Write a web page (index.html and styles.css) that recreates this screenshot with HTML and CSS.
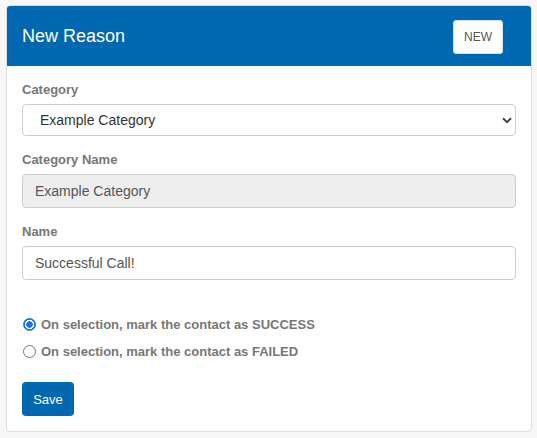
FILE: index.html
```html
<!DOCTYPE html>
<html>
<head>
<meta charset="utf-8">
<link rel="stylesheet" href="styles.css">
</head>
<body>
<div class="card">
  <div class="card-header">
    <h1 class="title">New Reason</h1>
    <button class="btn-new">NEW</button>
  </div>
  <div class="card-body">
    <div class="group">
      <label class="lbl">Category</label>
      <div class="select-wrap">
        <select class="control select"><option>Example Category</option></select>
        <svg class="chev" width="10" height="7" viewBox="0 0 10 7"><path d="M1 1.2 L5 5.2 L9 1.2" fill="none" stroke="#444" stroke-width="2"/></svg>
      </div>
    </div>
    <div class="group">
      <label class="lbl">Category Name</label>
      <input class="control disabled" value="Example Category" disabled>
    </div>
    <div class="group">
      <label class="lbl">Name</label>
      <input class="control" value="Successful Call!">
    </div>
    <div class="radios">
      <label class="radio"><input type="radio" name="r" checked><span>On selection, mark the contact as SUCCESS</span></label>
      <label class="radio"><input type="radio" name="r"><span>On selection, mark the contact as FAILED</span></label>
    </div>
    <button class="btn-save">Save</button>
  </div>
</div>
</body>
</html>
```
FILE: styles.css
```css
html, body { margin: 0; padding: 0; }
body {
  background: #f7f7f7;
  font-family: "Liberation Sans", Arial, Helvetica, sans-serif;
  padding: 5px 5px 0 6px;
}
.card {
  background: #fff;
  border: 1px solid #dcdcdc;
  border-radius: 4px;
  overflow: hidden;
  height: 427px;
  box-sizing: border-box;
}
.card-header {
  background: #0068b0;
  height: 60px;
  display: flex;
  align-items: center;
  justify-content: space-between;
  padding: 0 28px 0 15px;
}
.title {
  margin: 0;
  color: #fff;
  font-weight: 400;
  font-size: 18px;
}
.btn-new {
  width: 50px;
  height: 34px;
  background: #fff;
  border: 1px solid #ddd;
  border-radius: 3px;
  color: #555;
  font-family: inherit;
  font-size: 12px;
  padding: 0;
  margin-top: 1px;
}
.card-body {
  padding: 15px 15px 15px 15px;
}
.group { margin-bottom: 15px; }
.lbl {
  display: block;
  color: #777;
  font-size: 13px;
  font-weight: 700;
  line-height: 18px;
  margin-bottom: 5px;
}
.control {
  display: block;
  width: 100%;
  box-sizing: border-box;
  height: 34px;
  border: 1px solid #ccc;
  border-radius: 4px;
  padding: 0 12px;
  font-family: inherit;
  font-size: 14px;
  color: #555;
  background: #fff;
  margin: 0;
}
.select-wrap { position: relative; }
.select {
  appearance: none;
  -webkit-appearance: none;
  height: 32px;
  padding-left: 17px;
  color: #333;
}
.chev {
  position: absolute;
  right: 4px;
  top: 13px;
}
.disabled {
  background: #eee;
  color: #555;
  -webkit-text-fill-color: #555;
  opacity: 1;
}
.radios {
  padding-top: 20px;
  display: flex;
  flex-direction: column;
  gap: 8px;
}
.radio {
  display: flex;
  align-items: center;
  color: #777;
  font-size: 13px;
  font-weight: 700;
  line-height: 19px;
}
.radio input {
  appearance: none;
  -webkit-appearance: none;
  width: 13px;
  height: 13px;
  margin: 0 5px 0 1px;
  border: 1px solid #767676;
  border-radius: 50%;
  box-sizing: border-box;
  background: #fff;
}
.radio input:checked {
  border: 1px solid #1a73e8;
  background: radial-gradient(circle, #1a73e8 0 3px, #fff 3.5px 4.5px, #1a73e8 5px);
}
.btn-save {
  margin-top: 21px;
  width: 52px;
  height: 34px;
  background: #0068b0;
  color: #fff;
  border: none;
  border-radius: 4px;
  font-family: inherit;
  font-size: 13px;
  padding: 0;
}
```
